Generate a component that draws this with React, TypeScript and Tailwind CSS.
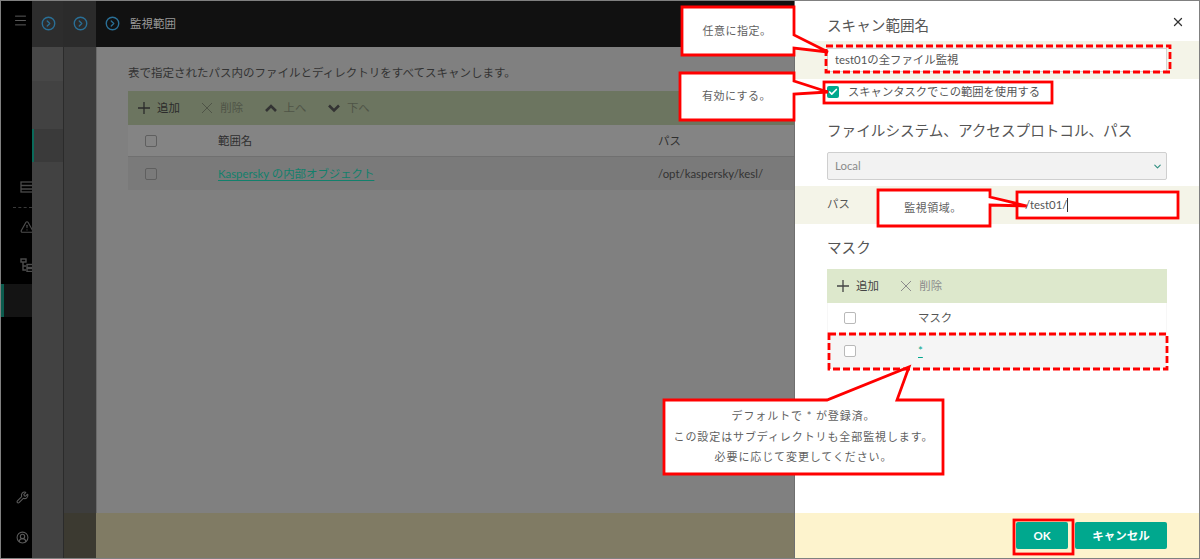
import { Menu, CircleChevronRight, ChevronDown, TriangleAlert, Wrench, CircleUserRound, Check, X } from "lucide-react";

const font = { fontFamily: '"Lato","Noto Sans CJK JP","Noto Sans",sans-serif' };

function HeadIcon() {
  return <CircleChevronRight size={15} strokeWidth={2.2} className="text-[#2a6f96]" />;
}

function Box({ bg = "bg-transparent", border = "border-[#b9b9b9]" }: { bg?: string; border?: string }) {
  return <span className={`block w-3 h-3 rounded-[2px] border ${bg} ${border}`} />;
}

function PlusIcon() {
  return <svg width="12" height="12" viewBox="0 0 12 12" fill="none" stroke="currentColor" strokeWidth="1.3"><path d="M6 0v12M0 6h12" /></svg>;
}
function CrossIcon() {
  return <svg width="12" height="12" viewBox="0 0 12 12" fill="none" stroke="currentColor" strokeWidth="1"><path d="M1 1l10 10M11 1L1 11" /></svg>;
}
function UpIcon() {
  return <svg width="12" height="12" viewBox="0 0 12 12" fill="none" stroke="#333333" strokeWidth="2.6"><path d="M1 9l5-5 5 5" /></svg>;
}
function DownIcon() {
  return <svg width="12" height="12" viewBox="0 0 12 12" fill="none" stroke="#333333" strokeWidth="2.6"><path d="M1 3.5l5 5 5-5" /></svg>;
}

function Tool({ icon, label, color }: { icon: React.ReactNode; label: string; color: string }) {
  return (
    <div className={`flex items-center gap-[7px] text-[11.4px] ${color}`}>
      {icon}
      <span>{label}</span>
    </div>
  );
}

function Callout({ className, children }: { className: string; children: React.ReactNode }) {
  return (
    <div className={`absolute flex flex-col items-center justify-center text-[11px] text-[#5f5f5f] ${className}`}>{children}</div>
  );
}

export default function App() {
  return (
    <div className="relative w-[1200px] h-[559px] overflow-hidden flex bg-[#808080]" style={font}>
      {/* global rail */}
      <div className="w-[32px] shrink-0 bg-black flex flex-col overflow-hidden">
        <div className="h-[40px] pl-[13px] pt-[13px]">
          <Menu size={15} className="text-[#5a5a5a]" strokeWidth={1.6} />
        </div>
        <div className="mt-[141px] pl-[20px] w-[44px]">
          <svg width="14" height="13" viewBox="0 0 14 13" fill="none" stroke="#4a4a4a" strokeWidth="1.3"><rect x="1" y="1" width="12" height="10" /><path d="M1 4.5h12M1 8h12" /></svg>
        </div>
        <div className="mt-[13px] ml-[13px] border-t border-dashed border-[#3a3a3a]" />
        <div className="mt-[12px] pl-[20px] w-[44px]">
          <TriangleAlert size={14} className="text-[#4d4d4d]" />
        </div>
        <div className="mt-[24px] pl-[20px] w-[44px]">
          <svg width="14" height="14" viewBox="0 0 14 14" fill="none" stroke="#4d4d4d" strokeWidth="1.4"><rect x="1" y="1" width="5" height="3" /><path d="M3 4v8h3M3 8h3" /><rect x="7" y="6.5" width="6" height="3" /><rect x="7" y="10.5" width="6" height="3" /></svg>
        </div>
        <div className="mt-[12px] h-[33px] bg-[#141414] flex shrink-0">
          <span className="ml-[1px] w-[3px] bg-[#0b5c4e]" />
        </div>
        <div className="mt-auto pl-[16px]">
          <Wrench size={13} className="text-[#5a5a5a] mb-[27px]" />
          <CircleUserRound size={13} className="text-[#5a5a5a] mb-[15px]" />
        </div>
      </div>

      {/* second column */}
      <div className="w-[32px] shrink-0 flex flex-col bg-[#424242] border-r border-[#2b2b2b]">
        <div className="h-[47px] bg-[#2d2d2d] flex items-center justify-center pl-[1px]">
          <HeadIcon />
        </div>
        <div className="h-[34px] bg-[#474747]" />
        <div className="h-[48px]" />
        <div className="h-[33px] bg-[#3a3a3a] flex">
          <span className="w-[2px] bg-[#0b6a5a]" />
        </div>
      </div>

      {/* third column */}
      <div className="w-[32px] shrink-0 flex flex-col bg-[#3d3d3d]">
        <div className="h-[47px] bg-[#2b2b2b] flex items-center justify-center">
          <HeadIcon />
        </div>
        <div className="flex-1" />
        <div className="h-[46px] bg-[#3c3a31]" />
      </div>

      {/* main panel */}
      <div className="w-[699px] shrink-0 flex flex-col border-r border-[#6f6f6f]">
        <div className="h-[47px] bg-[#111111] flex items-center pl-[9px] gap-[10px] text-[11.5px] text-[#9a9a9a]">
          <HeadIcon />
          <span>監視範囲</span>
        </div>
        <div className="flex-1 pl-[31px] border-l border-[#6a6a6a]">
          <p className="mt-[17px] h-[27px] text-[11.5px] leading-[17px] text-[#333333]">表で指定されたパス内のファイルとディレクトリをすべてスキャンします。</p>
          <div className="h-[34px] bg-[#6c7560] flex items-center pl-[10px] gap-[21.5px]">
            <Tool color="text-[#2b2b2b]" label="追加" icon={<PlusIcon />} />
            <Tool color="text-[#4f5447]" label="削除" icon={<CrossIcon />} />
            <Tool color="text-[#4f5447]" label="上へ" icon={<UpIcon />} />
            <Tool color="text-[#4f5447]" label="下へ" icon={<DownIcon />} />
          </div>
          <div className="h-[32px] bg-[#848484] border-b border-[#707070] flex items-center text-[11.4px] text-[#2f2f2f]">
            <span className="w-[90px] pl-[17px]"><Box border="border-[#5f5f5f]" /></span>
            <span className="w-[440px]">範囲名</span>
            <span>パス</span>
          </div>
          <div className="h-[33px] bg-[#7a7a7a] flex items-center text-[11.4px]">
            <span className="w-[90px] pl-[17px]"><Box border="border-[#5f5f5f]" /></span>
            <span className="w-[440px] text-[#12806c] underline underline-offset-2">Kaspersky の内部オブジェクト</span>
            <span className="text-[#333333]">/opt/kaspersky/kesl/</span>
          </div>
        </div>
        <div className="h-[46px] bg-[#807b64]" />
      </div>

      {/* right drawer */}
      <div className="flex-1 flex flex-col bg-white text-[#555555]">
        <div className="flex-1">
          <div className="relative h-[41px] pl-[32px] pt-[15px] text-[14.6px] leading-[22px]">
            スキャン範囲名
            <X size={14} strokeWidth={2.2} className="absolute right-[15px] top-[15px] text-[#333333]" />
          </div>
          <div className="h-[38px] bg-[#f4f4e8] pl-[32px] pr-[33px] flex items-center">
            <div className="w-full h-[24px] bg-white border border-[#d4d4d4] flex items-center pl-[7px] text-[11.4px]">test01の全ファイル監視</div>
          </div>
          <div className="h-[26px] pl-[32px] flex items-center gap-[9px] text-[11.3px]">
            <span className="w-[12px] h-[12px] rounded-[2px] bg-[#00a88e] flex items-center justify-center">
              <Check size={10} strokeWidth={4} className="text-white" />
            </span>
            <span>スキャンタスクでこの範囲を使用する</span>
          </div>
          <div className="mt-[15px] pl-[32px] text-[14.6px] leading-[22px]">ファイルシステム、アクセスプロトコル、パス</div>
          <div className="mt-[10px] ml-[32px] mr-[33px] h-[28px] rounded-[2px] bg-[#f2f2f2] border border-[#cfcfcf] flex items-center justify-between pl-[7px] pr-[3px] text-[11.4px] text-[#8a8a8a]">
            <span>Local</span>
            <ChevronDown size={11} strokeWidth={2.4} className="text-[#2f8f80]" />
          </div>
          <div className="mt-[6px] h-[38px] bg-[#f4f4e8] pl-[32px] flex items-center text-[11.4px] pb-[3px]">パス</div>
          <div className="mt-[13px] pl-[32px] text-[14.6px] leading-[22px]">マスク</div>
          <div className="mt-[10px] ml-[32px] mr-[33px]">
            <div className="h-[34px] bg-[#dde8cc] flex items-center pl-[10px] gap-[21.5px]">
              <Tool color="text-[#444444]" label="追加" icon={<PlusIcon />} />
              <Tool color="text-[#8c8c8c]" label="削除" icon={<CrossIcon />} />
            </div>
            <div className="h-[30px] flex items-center text-[11.4px] border-x border-[#f7f7f7]">
              <span className="w-[90px] pl-[16px]"><Box /></span>
              <span>マスク</span>
            </div>
            <div className="h-[36px] bg-[#f5f5f5] flex items-center text-[11.4px]">
              <span className="w-[91px] pl-[17px]"><Box bg="bg-white" /></span>
              <span className="text-[#00a88e] underline underline-offset-2">*</span>
            </div>
          </div>
        </div>
        <div className="h-[46px] bg-[#fdf3cd] flex items-center justify-end gap-[7px] pr-[33px] pb-[1px] text-[11.5px] font-bold text-white">
          <button className="w-[52px] h-[27px] rounded-[2px] bg-[#00a88e]">OK</button>
          <button className="w-[92px] h-[27px] rounded-[2px] bg-[#00a88e]">キャンセル</button>
        </div>
      </div>

      {/* annotations */}
      <svg className="absolute inset-0 pointer-events-none" width="1200" height="559" viewBox="0 0 1200 559" fill="white" stroke="#ff0000" strokeWidth="2.8" strokeLinejoin="miter">
        <path d="M682 7H794V35L828 52L794 48V55H682Z" />
        <path d="M680 73H794V81L828 92L794 94V120H680Z" />
        <rect x="1017" y="192" width="161" height="26" />
        <path d="M878 190H990V197L1027 206L990 205V226H878Z" />
        <path d="M664 400H827L909 367L897 400H943V474H664Z" />
        <g fill="none">
          <rect x="826" y="46" width="344" height="26" strokeDasharray="7 3" />
          <rect x="824" y="82" width="228" height="21" />
          <rect x="829" y="334" width="338" height="35" strokeDasharray="7 3" />
          <rect x="1014" y="520" width="59" height="34" />
        </g>
      </svg>
      <Callout className="left-[682px] top-[7px] w-[112px] h-[48px] pr-[2px] tracking-[0.5px]">任意に指定。</Callout>
      <Callout className="left-[680px] top-[73px] w-[114px] h-[47px] pr-[1px] tracking-[0.5px]">有効にする。</Callout>
      <Callout className="left-[878px] top-[190px] w-[112px] h-[36px] pr-[2px] tracking-[0.5px]">監視領域。</Callout>
      <div className="absolute left-[1025px] top-[192px] h-[26px] flex items-center text-[11.4px] text-[#555555]">/test01/<span className="w-px h-[14px] bg-[#333333]" /></div>
      <Callout className="left-[664px] top-[400px] w-[279px] h-[74px] leading-[20.5px] tracking-[0.9px]">
        <span>デフォルトで * が登録済。</span>
        <span>この設定はサブディレクトリも全部監視します。</span>
        <span>必要に応じて変更してください。</span>
      </Callout>
      <div className="absolute inset-0 border border-[#808080] pointer-events-none" />
    </div>
  );
}
